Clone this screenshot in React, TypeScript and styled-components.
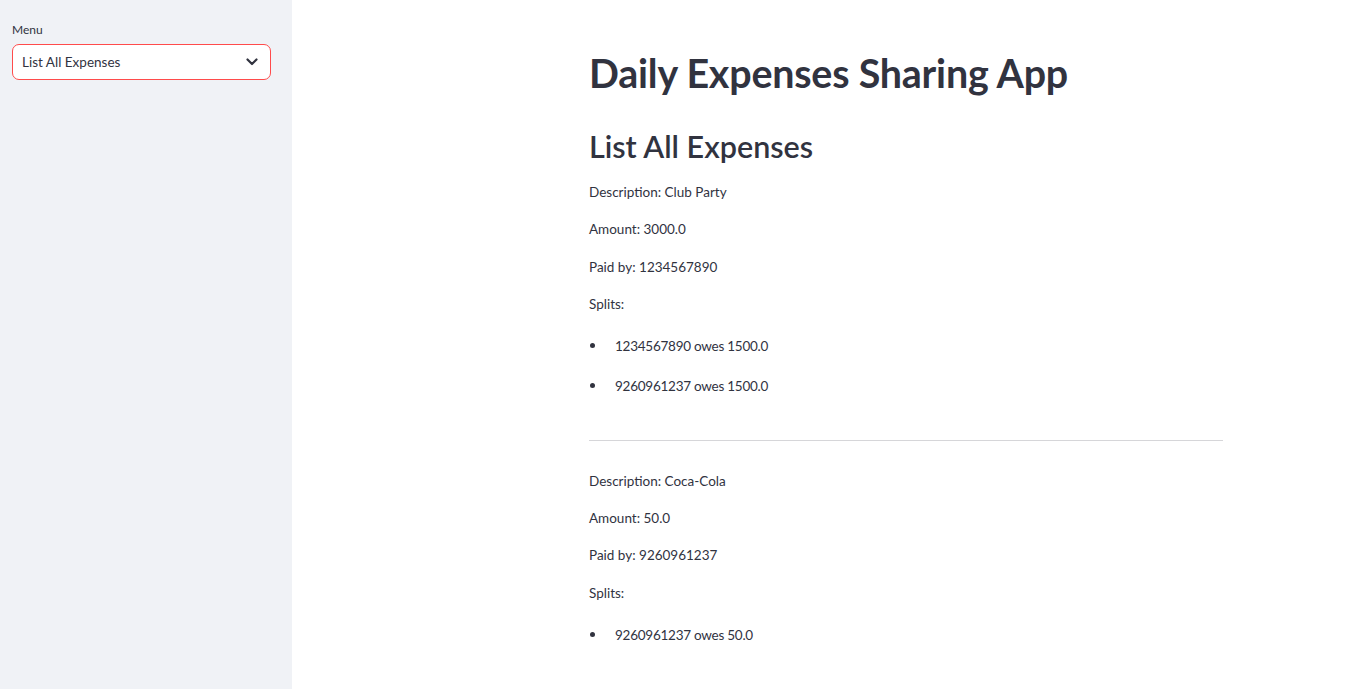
import React from "react";
import styled, { createGlobalStyle } from "styled-components";

const Global = createGlobalStyle`
  html, body { margin: 0; padding: 0; background: #ffffff; }
  body { font-family: "Lato", "Noto Sans", sans-serif; color: rgb(49, 51, 63); }
  * { box-sizing: border-box; }
`;

const Shell = styled.div`
  display: flex;
  min-height: 689px;
  height: 689px;
  overflow: hidden;
`;

const Sidebar = styled.aside`
  width: 292px;
  flex: 0 0 292px;
  background: #f0f2f6;
  padding: 22px 21px 0 12px;
  display: flex;
  flex-direction: column;
  gap: 6px;
`;

const Label = styled.label`
  font-size: 12px;
  line-height: 16px;
  color: rgb(49, 51, 63);
`;

const SelectBox = styled.div`
  height: 36px;
  border: 1px solid #ff4b4b;
  border-radius: 7px;
  background: #ffffff;
  display: flex;
  align-items: center;
  justify-content: space-between;
  padding: 0 12px 0 9px;
  font-size: 13.5px;
  color: rgb(49, 51, 63);
`;

const Main = styled.main`
  flex: 1;
  padding: 46px 0 0 297px;
`;

const Content = styled.div`
  width: 634px;
  display: flex;
  flex-direction: column;
`;

const H1 = styled.h1`
  margin: 0;
  font-size: 39.4px;
  line-height: 54px;
  font-weight: 700;
  letter-spacing: -0.2px;
`;

const H2 = styled.h2`
  margin: 24px 0 0;
  font-size: 30.5px;
  line-height: 44px;
  font-weight: 600;
`;

const Para = styled.p<{ $top?: number }>`
  margin: ${(p) => p.$top ?? 15.3}px 0 0;
  font-size: 13.5px;
  line-height: 22px;
`;

const Bullet = styled.li<{ $top?: number }>`
  margin: ${(p) => p.$top ?? 18}px 0 0;
  font-size: 13.5px;
  line-height: 22px;
  letter-spacing: -0.25px;
  list-style: none;
  display: flex;
  align-items: center;
  &::before {
    content: "";
    width: 5px;
    height: 5px;
    border-radius: 50%;
    background: rgb(49, 51, 63);
    margin: 0 20px 0 1px;
  }
`;

const List = styled.ul`
  margin: 0;
  padding: 0;
`;

const Divider = styled.hr`
  margin: 43px 0 29px;
  border: none;
  border-top: 1px solid rgba(49, 51, 63, 0.2);
  height: 0;
`;

const Chevron = () => (
  <svg width="12" height="8" viewBox="0 0 12 8" fill="none">
    <path d="M1.5 1.5 L6 6 L10.5 1.5" stroke="rgb(49,51,63)" strokeWidth="2.2" strokeLinecap="round" strokeLinejoin="round" />
  </svg>
);

type Expense = { desc: string; amount: string; paidBy: string; splits: string[] };

const expenses: Expense[] = [
  { desc: "Club Party", amount: "3000.0", paidBy: "1234567890", splits: ["1234567890 owes 1500.0", "9260961237 owes 1500.0"] },
  { desc: "Coca-Cola", amount: "50.0", paidBy: "9260961237", splits: ["9260961237 owes 50.0"] },
];

export default function App() {
  return (
    <Shell>
      <Global />
      <Sidebar>
        <Label>Menu</Label>
        <SelectBox>
          <span>List All Expenses</span>
          <Chevron />
        </SelectBox>
      </Sidebar>
      <Main>
        <Content>
          <H1>Daily Expenses Sharing App</H1>
          <H2>List All Expenses</H2>
          {expenses.map((e, i) => (
            <React.Fragment key={i}>
              {i > 0 && <Divider />}
              <Para $top={i === 0 ? 13 : 0}>Description: {e.desc}</Para>
              <Para>Amount: {e.amount}</Para>
              <Para>Paid by: {e.paidBy}</Para>
              <Para>Splits:</Para>
              <List>
                {e.splits.map((s, j) => (
                  <Bullet key={j} $top={j === 0 ? 20 : 18}>{s}</Bullet>
                ))}
              </List>
            </React.Fragment>
          ))}
        </Content>
      </Main>
    </Shell>
  );
}
